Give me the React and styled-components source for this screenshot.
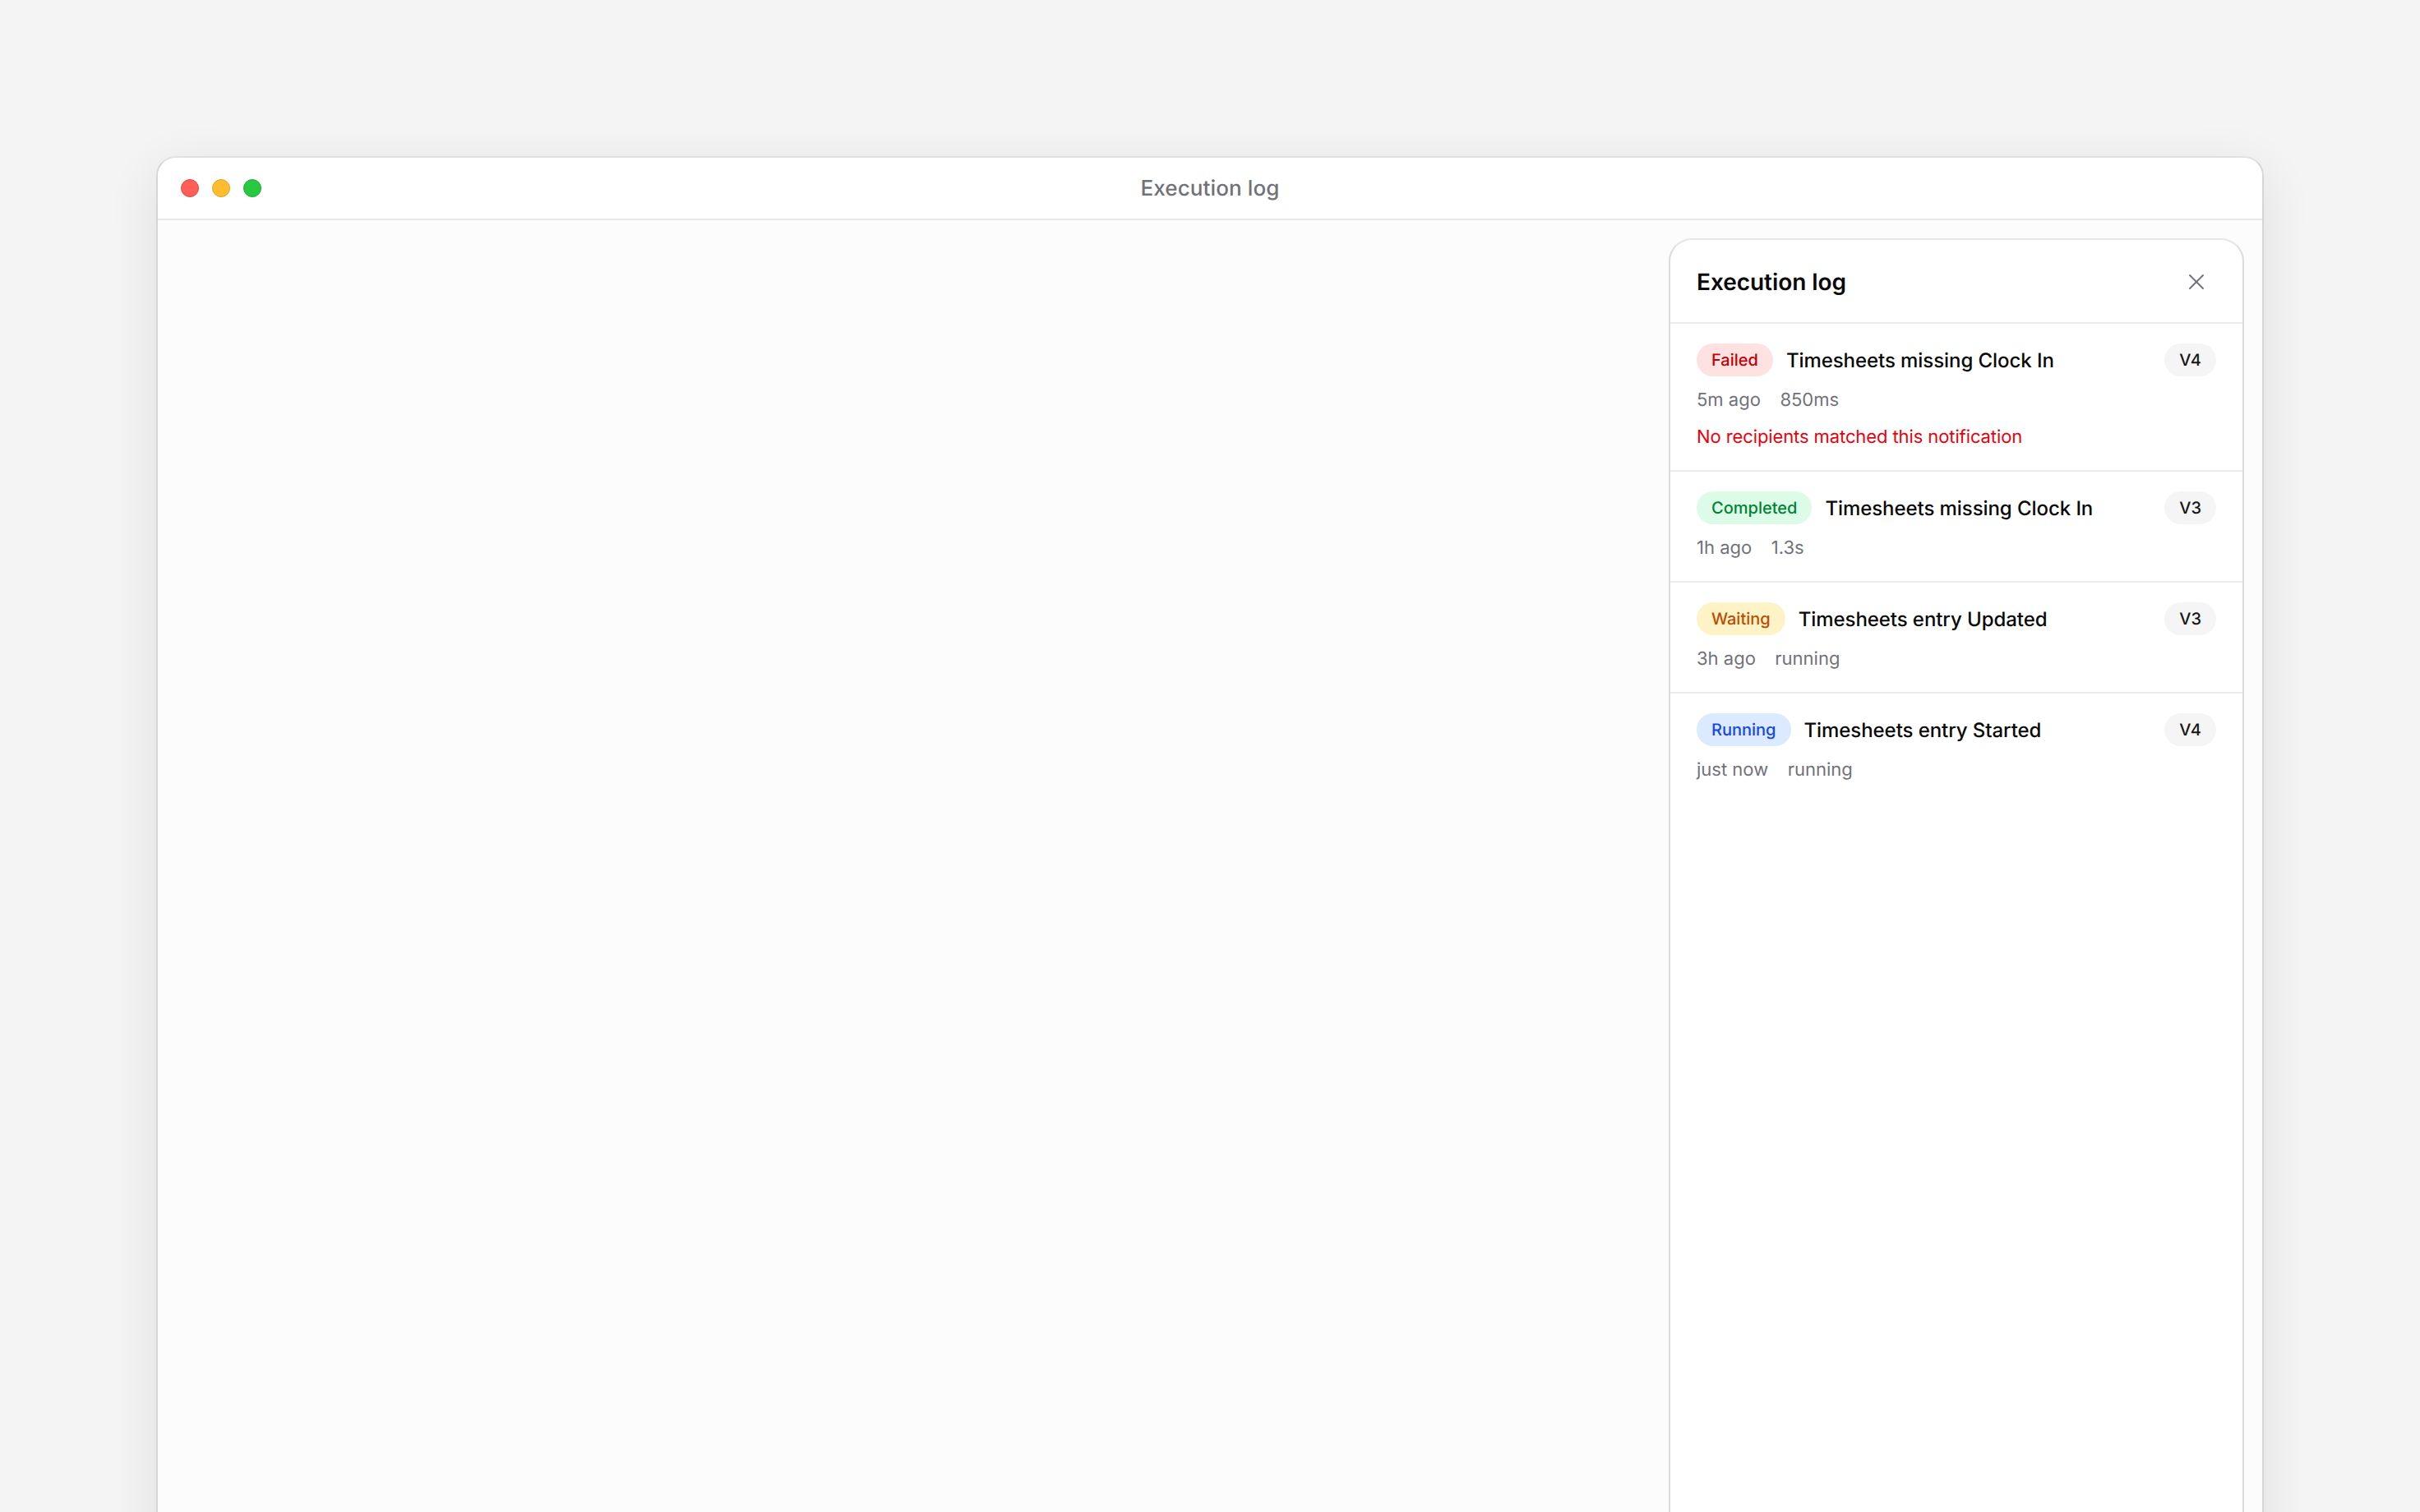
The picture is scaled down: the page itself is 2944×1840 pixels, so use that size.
import React from 'react';
import styled, { createGlobalStyle } from 'styled-components';
import { X } from 'lucide-react';

const GlobalStyle = createGlobalStyle`
  html, body {
    margin: 0;
    height: 100%;
    overflow: hidden;
    background: #f4f4f4;
    font-family: Inter, "Noto Sans", sans-serif;
    text-rendering: geometricPrecision;
    -webkit-font-smoothing: antialiased;
  }
  * { box-sizing: border-box; }
`;

const STATUS = {
  failed: { bg: '#fee2e2', fg: '#c10007' },
  completed: { bg: '#dcfce7', fg: '#008236' },
  waiting: { bg: '#fef3c6', fg: '#bb4d00' },
  running: { bg: '#dbeafe', fg: '#1447e6' },
};

const executions = [
  { status: 'failed', label: 'Failed', title: 'Timesheets missing Clock In', version: 'V4', time: '5m ago', duration: '850ms', error: 'No recipients matched this notification' },
  { status: 'completed', label: 'Completed', title: 'Timesheets missing Clock In', version: 'V3', time: '1h ago', duration: '1.3s' },
  { status: 'waiting', label: 'Waiting', title: 'Timesheets entry Updated', version: 'V3', time: '3h ago', duration: 'running' },
  { status: 'running', label: 'Running', title: 'Timesheets entry Started', version: 'V4', time: 'just now', duration: 'running' },
];

const App = () => (
  <Page>
    <GlobalStyle />
    <Window>
      <TitleBar>
        <Dots>
          <Dot $color="#ff5f57" $edge="#e0443e" />
          <Dot $color="#febc2e" $edge="#dea123" />
          <Dot $color="#28c840" $edge="#1aab29" />
        </Dots>
        <WindowTitle>Execution log</WindowTitle>
      </TitleBar>
      <Content>
        <Panel>
          <PanelHeader>
            <PanelTitle>Execution log</PanelTitle>
            <CloseButton aria-label="Close">
              <X size={32} strokeWidth={1.5} />
            </CloseButton>
          </PanelHeader>
          {executions.map((item, index) => (
            <LogRow key={index}>
              <RowTop>
                <Badge $status={item.status}>{item.label}</Badge>
                <RowTitle>{item.title}</RowTitle>
                <Version>{item.version}</Version>
              </RowTop>
              <Meta>
                <span>{item.time}</span>
                <span>{item.duration}</span>
              </Meta>
              {item.error && <ErrorText>{item.error}</ErrorText>}
            </LogRow>
          ))}
        </Panel>
      </Content>
    </Window>
  </Page>
);

export default App;

const Page = styled.div`
  height: 100vh;
  overflow: hidden;
  padding: 190px 190px 0;
`;

const Window = styled.div`
  height: 1900px;
  display: flex;
  flex-direction: column;
  background: #fcfcfc;
  border: 2px solid #d6d6d6;
  border-top-color: #e0e0e0;
  border-radius: 24px;
  box-shadow: 0 16px 64px rgba(0, 0, 0, 0.09);
  overflow: hidden;
`;

const TitleBar = styled.div`
  position: relative;
  flex: none;
  height: 76px;
  display: flex;
  align-items: center;
  justify-content: center;
  background: #fff;
  border-bottom: 2px solid #e8e8e8;
`;

const Dots = styled.div`
  position: absolute;
  left: 28px;
  top: 26px;
  display: flex;
  gap: 16px;
`;

const Dot = styled.span`
  width: 22px;
  height: 22px;
  border-radius: 50%;
  background: ${p => p.$color};
  border: 1px solid ${p => p.$edge};
`;

const WindowTitle = styled.div`
  font-size: 26px;
  font-weight: 500;
  letter-spacing: 0.1px;
  color: #71717a;
`;

const Content = styled.div`
  flex: 1;
  display: flex;
  justify-content: flex-end;
  padding: 22px 22px 0;
`;

const Panel = styled.aside`
  width: 700px;
  background: #fff;
  border: 2px solid #dcdcdc;
  border-top-color: #e5e5e5;
  border-radius: 28px;
  overflow: hidden;
`;

const PanelHeader = styled.header`
  height: 102px;
  display: flex;
  align-items: center;
  justify-content: space-between;
  padding: 2px 32px 0;
  border-bottom: 2px solid #ebebeb;
`;

const PanelTitle = styled.h2`
  margin: 0;
  font-size: 28px;
  font-weight: 600;
  letter-spacing: -0.05px;
  color: #0a0a0a;
`;

const CloseButton = styled.button`
  width: 48px;
  height: 48px;
  display: flex;
  align-items: center;
  justify-content: center;
  padding: 0;
  border: 0;
  background: transparent;
  color: #71717a;
`;

const LogRow = styled.div`
  padding: 24px 32px 22px;
  border-bottom: 2px solid #ebebeb;

  &:last-child {
    border-bottom: 0;
  }
`;

const RowTop = styled.div`
  display: flex;
  align-items: center;
  gap: 16px;
`;

const Badge = styled.span`
  height: 40px;
  display: inline-flex;
  align-items: center;
  padding: 0 18px;
  border-radius: 20px;
  font-size: 20px;
  font-weight: 500;
  background: ${p => STATUS[p.$status].bg};
  color: ${p => STATUS[p.$status].fg};
`;

const RowTitle = styled.span`
  flex: 1;
  font-size: 24px;
  font-weight: 500;
  letter-spacing: -0.07px;
  color: #0a0a0a;
`;

const Version = styled.span`
  height: 40px;
  display: inline-flex;
  align-items: center;
  padding: 0 18px;
  border-radius: 20px;
  font-size: 20px;
  font-weight: 500;
  background: #f5f5f5;
  color: #171717;
`;

const Meta = styled.div`
  display: flex;
  gap: 23.5px;
  margin-top: 11px;
  font-size: 22px;
  line-height: 36px;
  color: #71717a;
`;

const ErrorText = styled.div`
  margin-top: 9px;
  font-size: 22px;
  line-height: 36px;
  letter-spacing: -0.1px;
  color: #e7000b;
`;
